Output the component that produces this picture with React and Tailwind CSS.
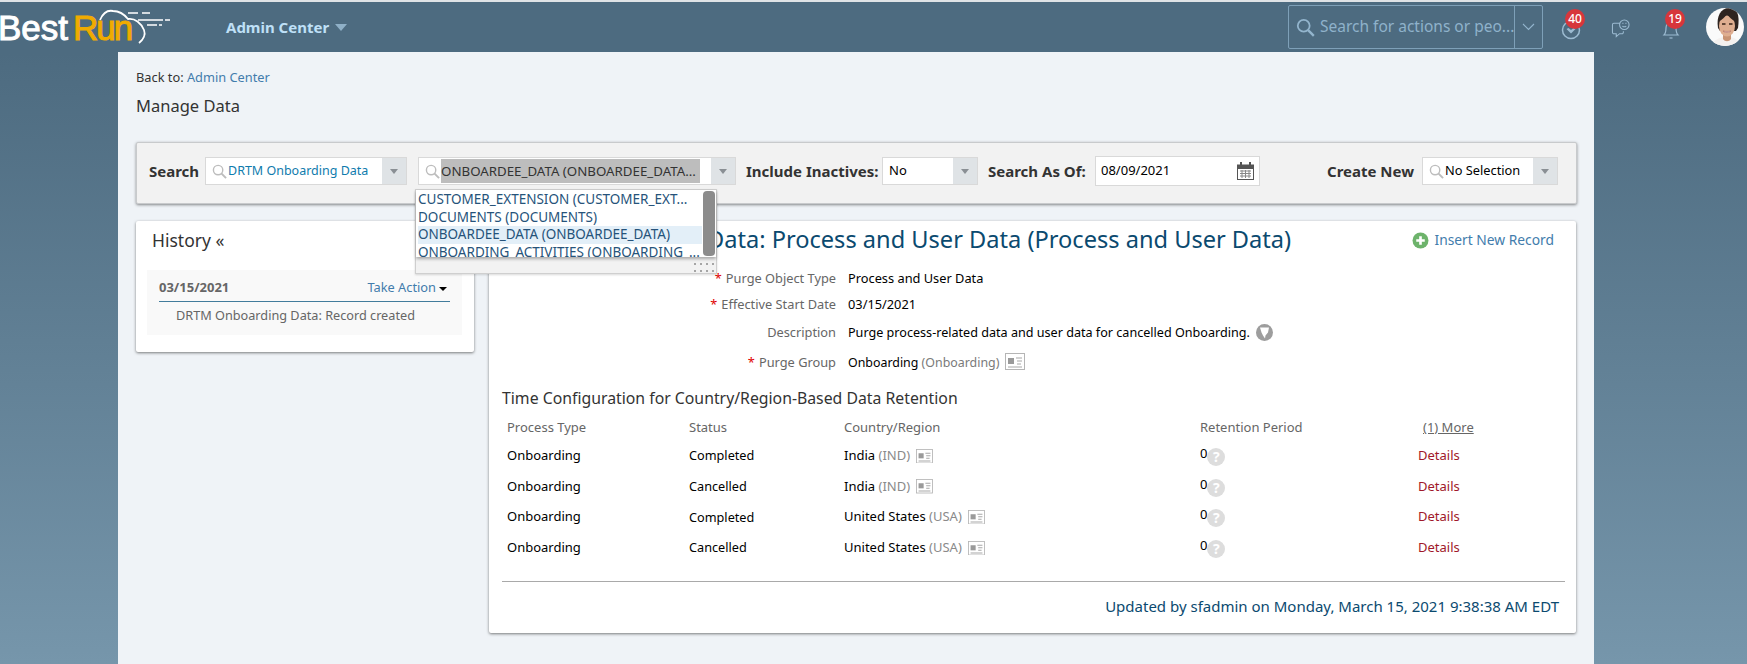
import React from "react";

const F = { fontFamily: '"Noto Sans", "Open Sans", sans-serif' };

function Mag({ c = "#bdbdbd", s = 15 }) {
  return (
    <svg width={s} height={s} viewBox="0 0 16 16" fill="none" stroke={c} strokeWidth="1.5" className="shrink-0">
      <circle cx="6.5" cy="6.5" r="5" />
      <path d="M10.2 10.2 15 15" strokeWidth="2" />
    </svg>
  );
}

function Caret() {
  return <span className="w-0 h-0 border-x-[4px] border-x-transparent border-t-[5px] border-t-[#8a8f94]" />;
}

function Combo({ w, icon, children, btn = "w-[24px]" }) {
  return (
    <div className={`${w} h-[28px] bg-white border border-[#d9d9d9] flex items-center shrink-0`}>
      {icon && <span className="ml-[6px] mr-[1px]"><Mag /></span>}
      <div className="flex-1 min-w-0 flex items-center">{children}</div>
      <span className={`${btn} h-full bg-[#dfe3e6] flex items-center justify-center shrink-0`}><Caret /></span>
    </div>
  );
}

function Card({ s = 20 }) {
  return (
    <svg width={s} height={s * 0.85} viewBox="0 0 20 17" className="inline-block ml-[6px] align-[-3px]">
      <rect x="0.5" y="0.5" width="19" height="16" fill="#fff" stroke="#b5b5b5" />
      <rect x="3" y="5" width="6" height="6" fill="#9a9a9a" />
      <path d="M11 5h6M12 8h5M12 11h4M3 14h14" stroke="#a8a8a8" strokeWidth="1.2" />
    </svg>
  );
}

function Help() {
  return (
    <span className="w-[18px] h-[18px] rounded-full bg-[#dddddd] text-white text-[14px] font-bold flex items-center justify-center leading-none mt-[2px]">?</span>
  );
}

function Field({ label, req, children, h }) {
  return (
    <div className={`flex items-center ${h}`}>
      <div className="w-[359px] pr-[12px] text-right text-[12.800px] text-[#666666]">
        {req && <span className="text-[#e00000] mr-[4px]">*</span>}
        {label}
      </div>
      <div className="text-black flex items-center">{children}</div>
    </div>
  );
}

const rows = [
  ["Completed", "India", "(IND)"],
  ["Cancelled", "India", "(IND)"],
  ["Completed", "United States", "(USA)"],
  ["Cancelled", "United States", "(USA)"],
];

function Avatar() {
  return (
    <svg width="38" height="38" viewBox="0 0 38 38" className="rounded-full shrink-0">
      <rect width="38" height="38" fill="#fafafa" />
      <path d="M12 20C10 8 15 0 23 0s11 6 9 20l-2 3H14z" fill="#2e2420" />
      <path d="M5 38c2-6 8-8 12-9h8c4 1 8 3 10 9z" fill="#f4f1ef" />
      <path d="M17 25h8v6c-2 3-6 3-8 0z" fill="#c99474" />
      <ellipse cx="21" cy="18" rx="8" ry="10.500" fill="#dfae90" />
      <path d="M13 13c3-1 6-4 8-7 2 3 5 6 8 7l-1-7-7-3-7 3z" fill="#2e2420" />
      <path d="M16 16h3.500M23 16h3.500" stroke="#3a2418" strokeWidth="1.300" />
      <path d="M17 23c2.500 2 5.500 2 8 0-2.500.6-5.500.6-8 0z" fill="#fff" stroke="#b0665a" strokeWidth=".6" />
    </svg>
  );
}

export default function App() {
  return (
    <div style={F} className="w-[1747px] h-[664px] overflow-hidden bg-gradient-to-b from-[#4d6b80] from-[8%] to-[#7696ab] relative">
      <div className="h-[2px] bg-[#dfe3e6]" />
      <header className="h-[50px] bg-[#4d6b80] flex items-center relative">
        <div className="w-[226px] shrink-0 h-full relative overflow-hidden">
          <div className="absolute left-[-2px] top-[4px] text-[35px] leading-[44px] whitespace-nowrap [-webkit-text-stroke:1px_currentColor]" style={{ fontFamily: '"Liberation Sans", sans-serif' }}>
            <span className="text-white">Best</span><span className="ml-[5px] text-[#f0ab00] tracking-[-2px]">Run</span>
          </div>
          <svg width="180" height="50" viewBox="0 0 180 50" className="absolute left-0 top-[-2px]" fill="none" stroke="#fff">
            <path d="M100 20C103 13 108 10 113 11 119 11 124 14 128 19 135 18 141 23 144 30 146 35 143 40 139 43" strokeWidth="1.8" />
            <path d="M128 13h10M142 13h8M138 20h25M165 20h5M147 25h10M159 25h3" strokeWidth="1.6" />
          </svg>
        </div>
        <span className="text-[15px] font-bold text-[#bfe0f7]">Admin Center</span>
        <span className="ml-[6px] w-0 h-0 border-x-[6px] border-x-transparent border-t-[7px] border-t-[#8fb0c7]" />
        <div className="ml-auto mr-[3px] flex items-center">
          <div className="w-[255px] h-[44px] border border-[#7ea0b8] rounded-[2px] flex items-center">
            <span className="ml-[7px] mr-[5px]"><Mag c="#93b5cd" s={19} /></span>
            <span className="text-[15.5px] text-[#8fb2cb] flex-1 whitespace-nowrap overflow-hidden">Search for actions or peo...</span>
            <span className="w-[28px] h-full border-l border-[#7ea0b8] flex items-center justify-center shrink-0">
              <svg width="13" height="8" viewBox="0 0 13 8" fill="none" stroke="#93b5cd" strokeWidth="1.1"><path d="M1 1l5.5 5.5L12 1" /></svg>
            </span>
          </div>
          <div className="relative w-[24px] h-[24px] ml-[17px] mt-[6px]">
            <svg width="20" height="20" viewBox="0 0 20 20" fill="none" stroke="#9cbbd1" strokeWidth="1.5" className="absolute left-[1px] top-[2px]">
              <circle cx="10" cy="10" r="8.5" />
              <path d="M5.5 9l4.5 4.5L14.500 9l-2-1-2.500 2-2.500-2z" fill="#9cbbd1" stroke="none" />
            </svg>
            <span className="absolute left-[5px] top-[-9px] w-[20px] h-[20px] rounded-full bg-[#d7363b] text-white text-[12px] font-medium flex items-center justify-center">40</span>
          </div>
          <svg width="20" height="19" viewBox="0 0 20 20" fill="none" stroke="#9cbbd1" strokeWidth="1.1" className="ml-[27px] mt-[2px]">
            <path d="M9 4.500H2.500a1.500 1.500 0 0 0-1.500 1.500v8a1.500 1.500 0 0 0 1.500 1.500H5v3l3.500-3H11a1.500 1.500 0 0 0 1.500-1.500v-1" />
            <circle cx="13.500" cy="6" r="5" />
            <path d="M11.500 4.600h1M14.700 4.600h1M11.500 7.500c1 1 3 1 4 0" />
          </svg>
          <div className="relative w-[20px] h-[24px] ml-[30px] mt-[4px]">
            <svg width="20" height="22" viewBox="0 0 20 22" fill="none" stroke="#9cbbd1" strokeWidth="1.2" className="absolute left-0 top-[1px]">
              <path d="M3 17c2-2 2-4 2-7 0-3 2-5 5-5s5 2 5 5c0 3 0 5 2 7z" />
              <path d="M8.500 20h3" />
            </svg>
            <span className="absolute left-[4px] top-[-8px] w-[20px] h-[20px] rounded-full bg-[#d7363b] text-white text-[12px] font-medium flex items-center justify-center">19</span>
          </div>
          <span className="ml-[25px]"><Avatar /></span>
        </div>
      </header>

      <main className="ml-[118px] w-[1476px] h-[612px] bg-[#eff3f7] px-[18px]">
        <div className="pt-[15px] text-[12.800px] leading-[20px] text-[#333333]">
          Back to: <span className="text-[#427cac]">Admin Center</span>
        </div>
        <h1 className="mt-[9px] text-[16.5px] leading-[20px] text-[#333333]">Manage Data</h1>

        <section className="relative mt-[26px] w-[1441px] h-[62px] bg-[#f2f2f2] border border-[#c8cacc] rounded-[2px] shadow-[0_1px_3px_rgba(0,0,0,0.45)] flex items-center pl-[12px] pb-[4px] text-[#333333]">
          <span className="text-[15px] font-bold w-[56px]">Search</span>
          <Combo w="w-[202px]" icon>
            <span className="text-[12.500px] text-[#0f7bad] whitespace-nowrap">DRTM Onboarding Data</span>
          </Combo>
          <div className="w-[11px] shrink-0" />
          <Combo w="w-[318px]" icon>
            <span className="text-[13.300px] text-[#333333] bg-[#bdbdbd] whitespace-nowrap leading-[24px] w-[259px] overflow-hidden">ONBOARDEE_DATA (ONBOARDEE_DATA...</span>
          </Combo>
          <span className="ml-[10px] w-[136px] text-[15px] font-bold whitespace-nowrap">Include Inactives:</span>
          <Combo w="w-[96px]" btn="w-[24px]">
            <span className="pl-[6px] text-[13px] text-black">No</span>
          </Combo>
          <span className="ml-[10px] w-[107px] text-[15px] font-bold whitespace-nowrap">Search As Of:</span>
          <div className="w-[165px] h-[30px] bg-white border border-[#d9d9d9] flex items-center justify-between pl-[5px] pr-[5px] shrink-0">
            <span className="text-[13px] text-black">08/09/2021</span>
            <svg width="17" height="18" viewBox="0 0 17 18">
              <rect x="0.5" y="3" width="16" height="14.500" fill="#fff" stroke="#555" />
              <rect x="0.5" y="3" width="16" height="4" fill="#555" />
              <path d="M4 0v4M13 0v4" stroke="#555" strokeWidth="2" />
              <path d="M3 9h11M3 11.500h11M3 14h11M5 8v8M8.500 8v8M12 8v8" stroke="#888" strokeWidth="1" />
            </svg>
          </div>
          <span className="ml-[67px] w-[95px] text-[15px] font-bold whitespace-nowrap">Create New</span>
          <Combo w="w-[136px]" icon>
            <span className="text-[12.800px] text-black whitespace-nowrap">No Selection</span>
          </Combo>

          <div className="absolute left-[278px] top-[46px] z-10 w-[302px] h-[85px] border border-[#cfcfcf] bg-[#f2f2f2] shadow-[0_1px_2px_rgba(0,0,0,0.15)]">
            <div className="relative h-[67px] bg-white pt-[1px] pl-[2px] shadow-[0_2px_3px_rgba(0,0,0,0.3)] overflow-hidden text-[13.500px] leading-[17.500px] text-[#26537a] whitespace-nowrap">
              <div className="h-[17.500px]">CUSTOMER_EXTENSION (CUSTOMER_EXT...</div>
              <div className="h-[17.500px]">DOCUMENTS (DOCUMENTS)</div>
              <div className="h-[17.500px] w-[284px] bg-[#e3eff8]">ONBOARDEE_DATA (ONBOARDEE_DATA)</div>
              <div className="h-[17.500px]">ONBOARDING_ACTIVITIES (ONBOARDING_...</div>
              <span className="absolute right-[1px] top-[1px] w-[12px] h-[65px] rounded-[4px] bg-[#8c8c8c]" />
            </div>
            <div className="absolute right-[2px] bottom-[1px] grid grid-cols-4 gap-x-[4px] gap-y-[5px]">
              {Array.from({ length: 8 }).map((_, i) => <span key={i} className="w-[2px] h-[2px] bg-[#a5a5a5]" />)}
            </div>
          </div>
        </section>

        <div className="flex items-start mt-[17px]">
          <section className="w-[338px] h-[131px] bg-white rounded-[2px] shadow-[0_1px_3px_rgba(0,0,0,0.5)] shrink-0 pl-[11px] pr-[12px]">
            <div className="pl-[5px] pt-[7px] text-[17.500px] leading-[24px] text-[#333333]">History «</div>
            <div className="mt-[18px] h-[65px] bg-[#f9f9f9] px-[12px]">
              <div className="h-[32px] pt-[4px] border-b border-[#427c9c] flex items-center text-[13px]">
                <span className="font-bold text-[#666666]">03/15/2021</span>
                <span className="ml-auto text-[#427cac] text-[12.800px]">Take Action</span>
                <span className="ml-[3px] mr-[3px] w-0 h-0 border-x-[4px] border-x-transparent border-t-[4px] border-t-black mt-[2px]" />
              </div>
              <div className="pl-[17px] pt-[3px] text-[12.700px] leading-[20px] text-[#666666]">DRTM Onboarding Data: Record created</div>
            </div>
          </section>

          <section className="ml-[15px] w-[1087px] h-[412px] bg-white rounded-[2px] shadow-[0_1px_3px_rgba(0,0,0,0.5)] shrink-0 relative text-[12.800px]">
            <div className="flex items-center h-[38px] pl-[218px] pr-[22px]">
              <h2 className="text-[23.600px] text-[#0b4a6f] whitespace-nowrap">Data: Process and User Data (Process and User Data)</h2>
              <svg width="17" height="17" viewBox="0 0 16 16" className="ml-auto shrink-0">
                <circle cx="8" cy="8" r="7.500" fill="#6db36b" />
                <path d="M8 4v8M4 8h8" stroke="#fff" strokeWidth="2.500" />
              </svg>
              <span className="ml-[5px] text-[13.800px] text-[#427cac] whitespace-nowrap">Insert New Record</span>
            </div>
            <div className="mt-[7px]">
              <Field label="Purge Object Type" req h="h-[26px]">Process and User Data</Field>
              <Field label="Effective Start Date" req h="h-[26px]">03/15/2021</Field>
              <Field label="Description" h="h-[28px] mt-[1px] text-[12.600px]">
                Purge process-related data and user data for cancelled Onboarding.
                <span className="ml-[6px] w-[17px] h-[17px] rounded-full bg-[#9d9d9d] flex items-center justify-center">
                  <svg width="11" height="13" viewBox="0 0 11 13"><path d="M1 1.500h9l-1 5-2.500 3-.5 3-2-3-1.500-3z" fill="#fff" /></svg>
                </span>
              </Field>
              <Field label="Purge Group" req h="h-[28px] mt-[2px] text-[12.400px]">
                <span>Onboarding <span className="text-[#7a7a7a]">(Onboarding)</span><Card /></span>
              </Field>
            </div>
            <h3 className="ml-[13px] mt-[9px] text-[15.800px] leading-[24px] text-[#333333]">Time Configuration for Country/Region-Based Data Retention</h3>
            <div className="mt-[5px] ml-[18px] grid grid-cols-[182px_155px_356px_218px_auto] text-[13px]">
              <div className="h-[25.500px] flex items-center text-[#666666]">Process Type</div>
              <div className="h-[25.500px] flex items-center text-[#666666]">Status</div>
              <div className="h-[25.500px] flex items-center text-[#666666]">Country/Region</div>
              <div className="h-[25.500px] flex items-center text-[#666666]">Retention Period</div>
              <div className="h-[25.500px] flex items-center text-[#666666] underline pl-[5px]">(1) More</div>
              {rows.map((r, i) => (
                <React.Fragment key={i}>
                  <div className="h-[30.700px] flex items-center text-black">Onboarding</div>
                  <div className="h-[30.700px] flex items-center text-black text-[12.700px]">{r[0]}</div>
                  <div className="h-[30.700px] flex items-center text-black">
                    <span>{r[1]} <span className="text-[#8a8a8a]">({r[2].slice(1, -1)})</span><Card s={17} /></span>
                  </div>
                  <div className="h-[30.700px] flex items-center text-black">
                    <span className="-mt-[4px]">0</span><Help />
                  </div>
                  <div className="h-[30.700px] flex items-center text-[#a01829]">Details</div>
                </React.Fragment>
              ))}
            </div>
            <div className="ml-[13px] mr-[11px] mt-[17.500px] border-t border-[#a9a9a9]" />
            <div className="mt-[13px] pr-[17px] text-right text-[15px] text-[#0b4a6f]">Updated by sfadmin on Monday, March 15, 2021 9:38:38 AM EDT</div>
          </section>
        </div>
      </main>
    </div>
  );
}
